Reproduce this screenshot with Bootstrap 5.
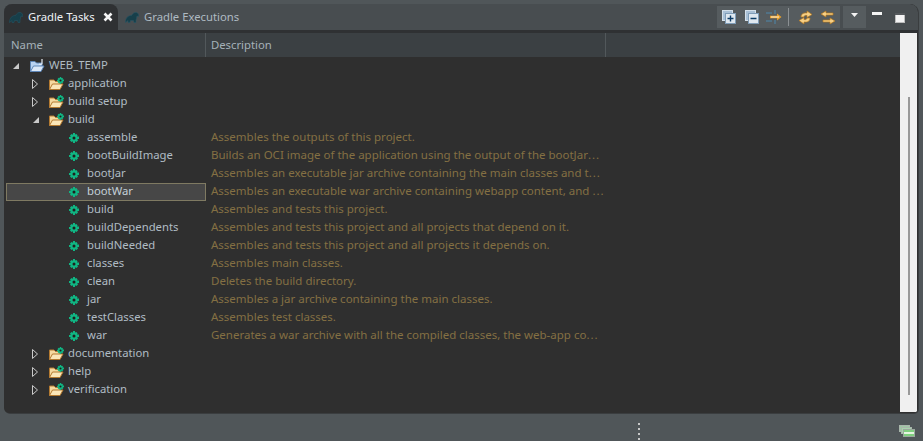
<!DOCTYPE html>
<html lang="en">
  <head>
    <meta charset="UTF-8" />
    <meta name="viewport" content="width=device-width, initial-scale=1.0" />
    <title>Gradle Tasks</title>
    <link
      href="https://cdn.jsdelivr.net/npm/bootstrap@5.3.0/dist/css/bootstrap.min.css"
      rel="stylesheet"
    />
    <style>
      html,
      body {
        height: 100%;
      }
      body {
        background-color: #505659;
        color: #b0bcc4;
        font-family: "Noto Sans", "Liberation Sans", sans-serif;
        font-size: 11.3px;
        overflow: hidden;
      }
      svg {
        display: block;
        flex: none;
      }
      .ide-shell {
        height: 441px;
        padding: 4px 5px 0 4px;
      }
      .ide-panel {
        height: 409px;
        background-color: #2f2f2f;
        border-radius: 8px 8px 5px 5px;
        box-shadow: 1px 1px 0 #3a3d3f;
      }
      .tab-strip {
        height: 26px;
        background-color: #484d50;
        border-radius: 8px 8px 0 0;
      }
      .tab-item {
        height: 26px;
        gap: 5px;
        white-space: nowrap;
      }
      .tab-active {
        width: 114px;
        padding-left: 5px;
        background-color: #2f3133;
        color: #eef2f5;
        border-radius: 8px 8px 0 0;
      }
      .tab-close {
        margin-left: 3px;
      }
      .tab-other {
        color: #aebac2;
        padding-left: 7px;
      }
      .tool-box {
        height: 22px;
        background-color: #565c5f;
        margin-top: 2px;
      }
      .tool-main {
        width: 123px;
        margin-right: 3px;
        padding-left: 5px;
      }
      .tool-drop {
        width: 23px;
        margin-right: 6px;
        padding-top: 7px;
      }
      .tool-gap-l {
        margin-right: 9px;
      }
      .tool-gap-s {
        margin-right: 7px;
      }
      .tool-sep {
        width: 1px;
        height: 18px;
        background-color: #8b9093;
        margin: 0 9px 0 6px;
      }
      .window-btns {
        width: 33px;
        height: 26px;
        margin-right: 13px;
        padding-top: 8px;
      }
      .window-max {
        margin-top: 1px;
      }
      .panel-gap {
        height: 3px;
        background-color: #2f3133;
      }
      .tree-side {
        min-width: 0;
      }
      .head-row {
        height: 24px;
        background-color: #3b4043;
        color: #a5b1b8;
      }
      .head-cell {
        height: 24px;
        padding-left: 5px;
        border-right: 1px solid #52585b;
      }
      .head-name {
        width: 202px;
        padding-left: 7px;
      }
      .head-desc {
        width: 400px;
      }
      .tree-row {
        height: 18px;
        width: 100%;
        white-space: nowrap;
      }
      .name-cell {
        width: 200px;
        height: 18px;
        margin-left: 2px;
        flex: none;
      }
      .name-cell.is-selected {
        background-color: #474747;
        outline: 1px solid #7f7a62;
        outline-offset: -1px;
        color: #c4d0d8;
      }
      .name-label {
        margin-top: -2px;
      }
      .desc-cell {
        color: #847043;
        font-size: 11.5px;
        padding-left: 5px;
        margin-top: -2px;
      }
      .desc-dots {
        letter-spacing: 1px;
      }
      .depth-0 {
        padding-left: 6px;
      }
      .depth-1 {
        padding-left: 26px;
      }
      .depth-2 {
        padding-left: 63px;
      }
      .twist {
        width: 8px;
        margin-right: 8px;
      }
      .depth-0 .twist {
        margin-right: 9px;
      }
      .folder-wrap {
        margin-right: 4px;
      }
      .gear-wrap {
        margin-right: 8px;
      }
      .scroll-track {
        width: 17px;
        margin-right: 1px;
        background-color: #f0f0f0;
        height: 379px;
      }
      .scroll-thumb {
        width: 2px;
        height: 298px;
        background-color: #999;
        margin-top: 64px;
      }
      .status-strip {
        height: 28px;
        padding-top: 10px;
      }
      .sash-dots {
        margin-left: 634px;
        gap: 3px;
      }
      .sash-dot {
        width: 2px;
        height: 2px;
        background-color: #c8c8c8;
      }
      .status-icon {
        margin-left: 259px;
        margin-top: 2px;
      }
    </style>
  </head>
  <body>
    <!-- icon defs -->
    <svg width="0" height="0" class="position-absolute">
      <defs>
        <symbol id="elephant" viewBox="0 0 14 11">
          <path d="M0.5 10.5 C0.5 6 3 3.5 6.5 3.5 C7.5 1.5 9.5 0 11.5 0.5 C13.5 1 14 3 13.5 4.5 L12 4 C11.5 5.5 11.5 7 11 8 L11 10.5 L9 10.5 L8.5 8.5 L5.5 8.5 L5 10.5 L3 10.5 L3 8.5 Z" fill="#173f4a" stroke="#24596a" stroke-width=".5" />
        </symbol>
        <symbol id="folder" viewBox="0 0 16 14">
          <path d="M1.5 12.5 V3 H6 L7.5 4.5 H12 V6.5" fill="#f6d9a0" stroke="#b47a30" />
          <path d="M1.5 12.5 L4.5 7 H15 L12 12.5 Z" fill="#fbe6b8" stroke="#b47a30" />
        </symbol>
        <symbol id="gear" viewBox="0 0 10 10">
          <path d="M4 0 H6 V1.5 L7.3 .9 L8.6 2.2 L8 3.5 H10 V6 H8.3 L9 7.4 L7.4 9 L6 8.3 V10 H4 V8.3 L2.6 9 L1 7.4 L1.7 6 H0 V4 H1.7 L1 2.6 L2.6 1 L4 1.7 Z" fill="#10b583" />
          <circle cx="5" cy="5" r="1.5" fill="#1e1e1e" />
        </symbol>
        <symbol id="tw-open" viewBox="0 0 8 8">
          <path d="M7 1 V7 H1 Z" fill="#c9c9c9" />
        </symbol>
        <symbol id="tw-closed" viewBox="0 0 8 10">
          <path d="M.5 .5 L5.5 5 L.5 9.5 Z" fill="none" stroke="#c9c9c9" />
        </symbol>
      </defs>
    </svg>

    <div class="ide-shell d-flex flex-column">
      <div class="ide-panel d-flex flex-column overflow-hidden">
        <!-- tabs + toolbar -->
        <div class="tab-strip d-flex align-items-start">
          <div class="tab-item tab-active d-flex align-items-center">
            <svg width="14" height="11"><use href="#elephant" /></svg>
            <span>Gradle Tasks</span>
            <svg class="tab-close" width="10" height="10" viewBox="0 0 10 10">
              <path d="M1.5 1.5 L8.5 8.5 M8.5 1.5 L1.5 8.5" stroke="#f4f4f4" stroke-width="2.6" />
            </svg>
          </div>
          <div class="tab-item tab-other d-flex align-items-center">
            <svg width="14" height="11"><use href="#elephant" /></svg>
            <span>Gradle Executions</span>
          </div>
          <div class="tool-box tool-main ms-auto d-flex align-items-center">
            <svg class="tool-gap-l" width="14" height="14" viewBox="0 0 14 14">
              <rect x=".5" y=".5" width="10" height="10" fill="#a9c0d6" stroke="#d4e0ea" />
              <rect x="3.5" y="3.5" width="10" height="10" fill="#dfe8f0" stroke="#7f9db8" />
              <path d="M8.5 5.5 V11.5 M5.5 8.5 H11.5" stroke="#0c3c66" stroke-width="1.4" />
            </svg>
            <svg class="tool-gap-s" width="14" height="14" viewBox="0 0 14 14">
              <rect x=".5" y=".5" width="10" height="10" fill="#a9c0d6" stroke="#d4e0ea" />
              <rect x="3.5" y="3.5" width="10" height="10" fill="#dfe8f0" stroke="#7f9db8" />
              <path d="M5.5 8.5 H11.5" stroke="#0c3c66" stroke-width="1.4" />
            </svg>
            <svg width="16" height="14" viewBox="0 0 16 14">
              <path d="M0 3 H6 M0 11 H6 M9 0 V4 M9 10 V14" stroke="#4d87ad" />
              <path d="M4 7 H13" stroke="#e9a02c" stroke-width="2.6" />
              <path d="M11 3.5 L15.5 7 L11 10.5 Z" fill="#e9a02c" />
              <path d="M5 7 H13" stroke="#fff3d6" />
            </svg>
            <span class="tool-sep"></span>
            <svg class="tool-gap-s" width="15" height="15" viewBox="0 0 15 15">
              <path d="M3 7 C3 3.5 6 2.5 9 3 L9 1 L14 4.5 L9 7.5 L9 5.5 C7 5 6 6 6 7 Z" fill="#f6cf85" stroke="#b87a1e" stroke-width=".7" />
              <path d="M12 8 C12 11.5 9 12.5 6 12 L6 14 L1 10.5 L6 7.5 L6 9.5 C8 10 9 9 9 8 Z" fill="#f6cf85" stroke="#b87a1e" stroke-width=".7" />
            </svg>
            <svg width="16" height="15" viewBox="0 0 16 15">
              <path d="M6 1 L1 4 L6 7 V5 H13 V3 H6 Z" fill="#f6cf85" stroke="#b87a1e" stroke-width=".7" />
              <path d="M10 8 L15 11 L10 14 V12 H3 V10 H10 Z" fill="#f6cf85" stroke="#b87a1e" stroke-width=".7" />
            </svg>
          </div>
          <div class="tool-box tool-drop d-flex align-items-start justify-content-center">
            <svg width="7" height="4" viewBox="0 0 7 4"><path d="M0 0 H7 L3.5 4 Z" fill="#f4f4f4" /></svg>
          </div>
          <div class="window-btns d-flex align-items-start justify-content-between">
            <svg width="10" height="3" viewBox="0 0 10 3"><rect width="10" height="3" fill="#f4f4f4" /></svg>
            <svg class="window-max" width="10" height="10" viewBox="0 0 10 10">
              <rect x=".5" y=".5" width="9" height="9" fill="#f4f4f4" stroke="#bdbdbd" />
              <rect y="0" width="10" height="2" fill="#55595c" />
            </svg>
          </div>
        </div>
        <div class="panel-gap"></div>

        <!-- tree table -->
        <div class="d-flex flex-grow-1">
          <div class="tree-side flex-grow-1">
            <div class="head-row d-flex">
              <div class="head-cell head-name d-flex align-items-center">Name</div>
              <div class="head-cell head-desc d-flex align-items-center">Description</div>
            </div>
            <div id="tree-rows"></div>
          </div>
          <div class="scroll-track d-flex justify-content-center">
            <div class="scroll-thumb"></div>
          </div>
        </div>
      </div>

      <!-- status bar -->
      <div class="status-strip d-flex align-items-start">
        <div class="sash-dots d-flex flex-column">
          <span class="sash-dot"></span>
          <span class="sash-dot"></span>
          <span class="sash-dot"></span>
          <span class="sash-dot"></span>
        </div>
        <svg class="status-icon" width="16" height="12" viewBox="0 0 16 12">
          <rect x=".5" y=".5" width="10" height="6" fill="#9fc7a4" stroke="#a9b7ac" />
          <rect x="2.5" y="2.5" width="10" height="6" fill="#a8d3ad" stroke="#a9b7ac" />
          <rect x="4.5" y="4.5" width="11" height="7" fill="#7fcf7f" stroke="#9aa89d" />
          <rect x="5" y="7" width="10" height="2" fill="#e4f5e0" />
        </svg>
      </div>
    </div>

    <script>
      // 樹狀資料
      const rows = [
        { name: "WEB_TEMP", depth: 0, type: "root", open: true, desc: "" },
        { name: "application", depth: 1, type: "folder", open: false, desc: "" },
        { name: "build setup", depth: 1, type: "folder", open: false, desc: "" },
        { name: "build", depth: 1, type: "folder", open: true, desc: "" },
        { name: "assemble", depth: 2, type: "task", desc: "Assembles the outputs of this project." },
        { name: "bootBuildImage", depth: 2, type: "task", desc: "Builds an OCI image of the application using the output of the bootJar..." },
        { name: "bootJar", depth: 2, type: "task", desc: "Assembles an executable jar archive containing the main classes and t..." },
        { name: "bootWar", depth: 2, type: "task", selected: true, desc: "Assembles an executable war archive containing webapp content, and ..." },
        { name: "build", depth: 2, type: "task", desc: "Assembles and tests this project." },
        { name: "buildDependents", depth: 2, type: "task", desc: "Assembles and tests this project and all projects that depend on it." },
        { name: "buildNeeded", depth: 2, type: "task", desc: "Assembles and tests this project and all projects it depends on." },
        { name: "classes", depth: 2, type: "task", desc: "Assembles main classes." },
        { name: "clean", depth: 2, type: "task", desc: "Deletes the build directory." },
        { name: "jar", depth: 2, type: "task", desc: "Assembles a jar archive containing the main classes." },
        { name: "testClasses", depth: 2, type: "task", desc: "Assembles test classes." },
        { name: "war", depth: 2, type: "task", desc: "Generates a war archive with all the compiled classes, the web-app co..." },
        { name: "documentation", depth: 1, type: "folder", open: false, desc: "" },
        { name: "help", depth: 1, type: "folder", open: false, desc: "" },
        { name: "verification", depth: 1, type: "folder", open: false, desc: "" },
      ];

      function rowIcon(row) {
        if (row.type === "task") {
          return `<span class="gear-wrap"><svg width="10" height="10"><use href="#gear" /></svg></span>`;
        }
        const twist = row.open
          ? `<svg class="twist" width="8" height="8"><use href="#tw-open" /></svg>`
          : `<svg class="twist" width="8" height="10"><use href="#tw-closed" /></svg>`;
        if (row.type === "root") {
          return `${twist}<span class="folder-wrap"><svg width="16" height="14" viewBox="0 0 16 14">
            <path d="M1.5 12.5 V2.5 H6 L7.5 4 H13 V7" fill="#b9d3f2" stroke="#5f87b8" />
            <path d="M1.5 12.5 L4.5 7 H15 L12 12.5 Z" fill="#dbe8f8" stroke="#5f87b8" />
            <path d="M13 0 V4 Q13 6 10 5" fill="none" stroke="#e8eef5" stroke-width="1.2" />
          </svg></span>`;
        }
        return `${twist}<span class="folder-wrap position-relative">
          <svg width="16" height="14"><use href="#folder" /></svg>
          <svg class="position-absolute top-0 end-0" width="7" height="7"><use href="#gear" /></svg>
        </span>`;
      }

      const treeRows = document.getElementById("tree-rows");
      rows.forEach((row) => {
        const div = document.createElement("div");
        const desc = row.desc.replace("...", `<span class="desc-dots">...</span>`);
        div.className = "tree-row d-flex align-items-center";
        div.innerHTML = `
          <div class="name-cell d-flex align-items-center depth-${row.depth}${row.selected ? " is-selected" : ""}">
            ${rowIcon(row)}<span class="name-label">${row.name}</span>
          </div>
          <div class="desc-cell">${desc}</div>
        `;
        treeRows.appendChild(div);
      });
    </script>

    <script src="https://cdn.jsdelivr.net/npm/bootstrap@5.3.0/dist/js/bootstrap.bundle.min.js"></script>
  </body>
</html>
